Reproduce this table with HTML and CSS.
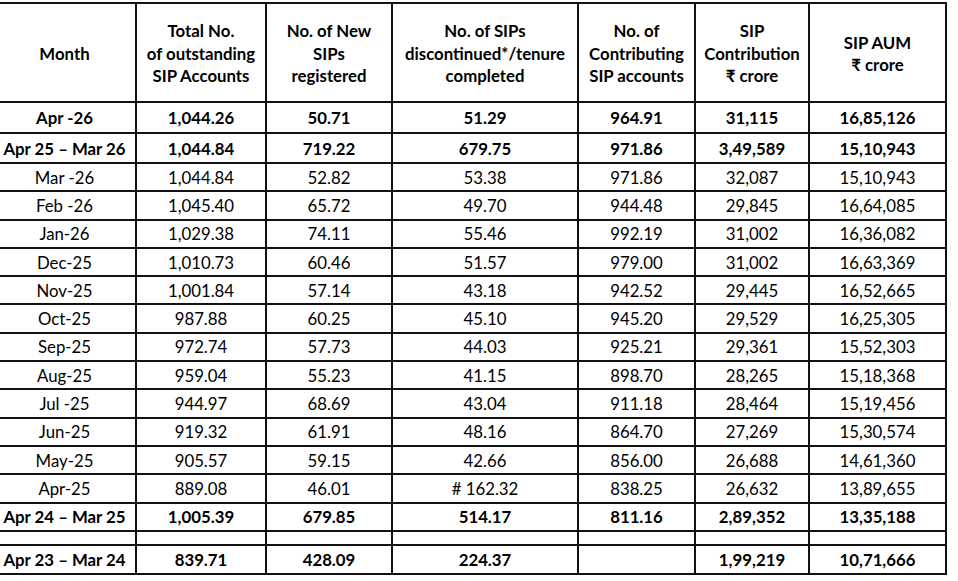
FILE: index.html
```html
<!DOCTYPE html>
<html lang="en">
<head>
<meta charset="utf-8">
<title>SIP Data</title>
<link rel="stylesheet" href="styles.css">
</head>
<body>
<table class="sip">
  <colgroup>
    <col class="c1"><col class="c2"><col class="c3"><col class="c4"><col class="c5"><col class="c6"><col class="c7">
  </colgroup>
  <thead>
    <tr class="r-hd">
      <th class="first">Month</th>
      <th>Total No.<br>of outstanding<br>SIP Accounts</th>
      <th>No. of New<br>SIPs<br>registered</th>
      <th>No. of SIPs<br>discontinued*/tenure<br>completed</th>
      <th>No. of<br>Contributing<br>SIP accounts</th>
      <th>SIP<br>Contribution<br>₹ crore</th>
      <th>SIP AUM<br>₹ crore</th>
    </tr>
  </thead>
  <tbody>
    <tr class="bold r-a"><td class="first">Apr -26</td><td>1,044.26</td><td>50.71</td><td>51.29</td><td>964.91</td><td>31,115</td><td>16,85,126</td></tr>
    <tr class="bold r-b"><td class="first">Apr 25 – Mar 26</td><td>1,044.84</td><td>719.22</td><td>679.75</td><td>971.86</td><td>3,49,589</td><td>15,10,943</td></tr>
    <tr class="r-n"><td class="first">Mar -26</td><td>1,044.84</td><td>52.82</td><td>53.38</td><td>971.86</td><td>32,087</td><td>15,10,943</td></tr>
    <tr class="r-n"><td class="first">Feb -26</td><td>1,045.40</td><td>65.72</td><td>49.70</td><td>944.48</td><td>29,845</td><td>16,64,085</td></tr>
    <tr class="r-n"><td class="first">Jan-26</td><td>1,029.38</td><td>74.11</td><td>55.46</td><td>992.19</td><td>31,002</td><td>16,36,082</td></tr>
    <tr class="r-n"><td class="first">Dec-25</td><td>1,010.73</td><td>60.46</td><td>51.57</td><td>979.00</td><td>31,002</td><td>16,63,369</td></tr>
    <tr class="r-n"><td class="first">Nov-25</td><td>1,001.84</td><td>57.14</td><td>43.18</td><td>942.52</td><td>29,445</td><td>16,52,665</td></tr>
    <tr class="r-n"><td class="first">Oct-25</td><td>987.88</td><td>60.25</td><td>45.10</td><td>945.20</td><td>29,529</td><td>16,25,305</td></tr>
    <tr class="r-n"><td class="first">Sep-25</td><td>972.74</td><td>57.73</td><td>44.03</td><td>925.21</td><td>29,361</td><td>15,52,303</td></tr>
    <tr class="r-n"><td class="first">Aug-25</td><td>959.04</td><td>55.23</td><td>41.15</td><td>898.70</td><td>28,265</td><td>15,18,368</td></tr>
    <tr class="r-n"><td class="first">Jul -25</td><td>944.97</td><td>68.69</td><td>43.04</td><td>911.18</td><td>28,464</td><td>15,19,456</td></tr>
    <tr class="r-n"><td class="first">Jun-25</td><td>919.32</td><td>61.91</td><td>48.16</td><td>864.70</td><td>27,269</td><td>15,30,574</td></tr>
    <tr class="r-n"><td class="first">May-25</td><td>905.57</td><td>59.15</td><td>42.66</td><td>856.00</td><td>26,688</td><td>14,61,360</td></tr>
    <tr class="r-n"><td class="first">Apr-25</td><td>889.08</td><td>46.01</td><td># 162.32</td><td>838.25</td><td>26,632</td><td>13,89,655</td></tr>
    <tr class="bold r-n"><td class="first">Apr 24 – Mar 25</td><td>1,005.39</td><td>679.85</td><td>514.17</td><td>811.16</td><td>2,89,352</td><td>13,35,188</td></tr>
    <tr class="r-blank"><td class="first"></td><td></td><td></td><td></td><td></td><td></td><td></td></tr>
    <tr class="bold r-last"><td class="first">Apr 23 – Mar 24</td><td>839.71</td><td>428.09</td><td>224.37</td><td></td><td>1,99,219</td><td>10,71,666</td></tr>
  </tbody>
</table>
</body>
</html>
```

FILE: styles.css
```css
html, body {
  margin: 0;
  padding: 0;
  background: #ffffff;
}

body {
  padding-top: 2px;
  font-family: "Lato", "Open Sans", sans-serif;
  color: #000000;
}

.sip {
  border-collapse: collapse;
  table-layout: fixed;
  width: 946px;
  font-size: 16.8px;
}

.c1 { width: 136px; }
.c2 { width: 130px; }
.c3 { width: 126px; }
.c4 { width: 186px; }
.c5 { width: 117px; }
.c6 { width: 114px; }
.c7 { width: 137px; }

.sip th,
.sip td {
  border: 2px solid #111111;
  text-align: center;
  vertical-align: middle;
  padding: 0;
  white-space: nowrap;
}

.sip th {
  font-weight: 700;
  line-height: 22.5px;
  padding-top: 3px;
}

.sip td {
  font-weight: 400;
  line-height: 18px;
  padding-top: 1px;
}

.sip th.first,
.sip td.first {
  border-left: none;
  padding-right: 6px;
}

.sip tr.bold td {
  font-weight: 700;
}

.r-hd { height: 99px; }
.r-a { height: 31px; }
.r-b { height: 30px; }
.r-n { height: 28.3px; }
.r-blank { height: 14px; }
.r-last { height: 29px; }
```
